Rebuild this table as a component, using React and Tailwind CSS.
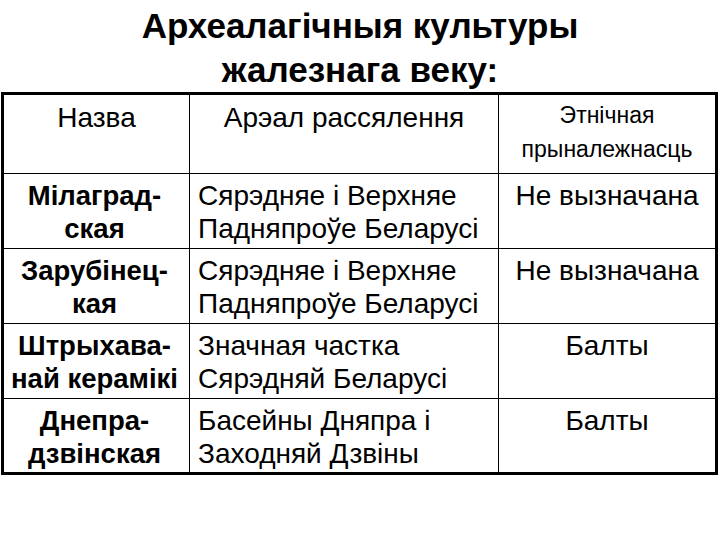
const rows = [
  { name: ["Мілаград-", "ская"], area: ["Сярэдняе і Верхняе", "Падняпроўе Беларусі"], ethnos: "Не вызначана" },
  { name: ["Зарубінец-", "кая"], area: ["Сярэдняе і Верхняе", "Падняпроўе Беларусі"], ethnos: "Не вызначана" },
  { name: ["Штрыхава-", "най керамікі"], area: ["Значная частка", "Сярэдняй Беларусі"], ethnos: "Балты" },
  { name: ["Днепра-", "дзвінская"], area: ["Басейны Дняпра і", "Заходняй Дзвіны"], ethnos: "Балты" },
];

export default function App() {
  return (
    <div className="w-[720px] h-[540px] bg-white text-black font-['Liberation_Sans',Arial,sans-serif]">
      <h1 className="pt-[4px] text-center text-[35px] leading-[44px] font-bold">
        Археалагічныя культуры
        <br />
        жалезнага веку:
      </h1>
      <table className="ml-px w-[717px] border-collapse border-[3px] border-black table-fixed">
        <colgroup>
          <col className="w-[187px]" />
          <col className="w-[309px]" />
          <col />
        </colgroup>
        <thead>
          <tr className="h-[80px] align-top">
            <th className="border border-black pt-[6px] text-[28px] leading-[33px] font-normal text-center">Назва</th>
            <th className="border border-black pt-[6px] text-[28px] leading-[33px] font-normal text-center">Арэал рассялення</th>
            <th className="border border-black pt-[3px] text-[23px] leading-[34px] font-normal text-center">
              Этнічная
              <br />
              прыналежнасць
            </th>
          </tr>
        </thead>
        <tbody>
          {rows.map((r, i) => (
            <tr key={i} className="h-[75px] align-top leading-[33px]">
              <td className="border border-black pt-[5px] pr-[4px] text-[27.5px] font-bold text-center whitespace-nowrap">
                {r.name[0]}
                <br />
                {r.name[1]}
              </td>
              <td className="border border-black pt-[5px] pl-[8px] text-[28px] whitespace-nowrap">
                {r.area[0]}
                <br />
                {r.area[1]}
              </td>
              <td className="border border-black pt-[5px] text-[28px] text-center whitespace-nowrap">{r.ethnos}</td>
            </tr>
          ))}
        </tbody>
      </table>
    </div>
  );
}
